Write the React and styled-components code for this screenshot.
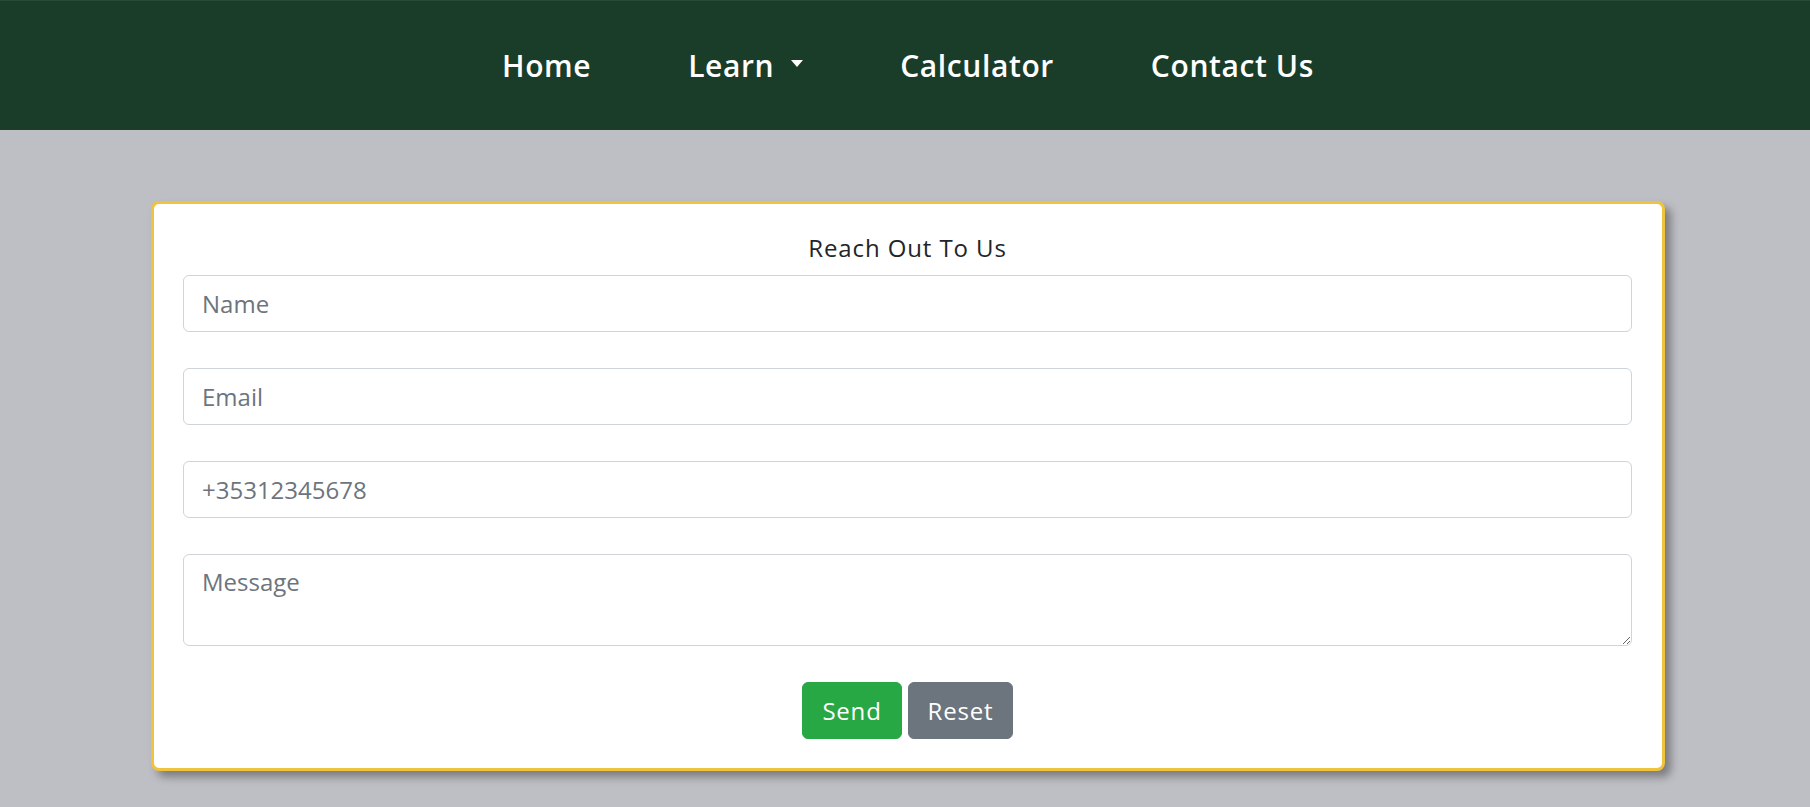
import React from "react";
import styled, { createGlobalStyle } from "styled-components";

const Global = createGlobalStyle`
  * { box-sizing: border-box; }
  html, body { margin: 0; padding: 0; }
  body {
    background: #bebfc4;
    font-family: "Open Sans", "Liberation Sans", sans-serif;
    color: #212529;
    min-height: 807px;
  }
`;

const NavBar = styled.nav`
  height: 130px;
  background: #1a3d29;
  border-top: 1px solid #274a36;
  display: flex;
  align-items: center;
  justify-content: center;
  padding-left: 6px;
`;

const NavList = styled.ul`
  list-style: none;
  margin: 0;
  padding: 0;
  display: flex;
  align-items: center;
  gap: 97px;
`;

const NavLink = styled.a`
  display: flex;
  align-items: center;
  gap: 17px;
  color: #ffffff;
  text-decoration: none;
  font-family: "Open Sans", "Lato", sans-serif;
  font-weight: 600;
  font-size: 30px;
  line-height: 45px;
  letter-spacing: 0.6px;
`;

const Caret = styled.span`
  width: 0;
  height: 0;
  border-left: 6.5px solid transparent;
  border-right: 6.5px solid transparent;
  border-top: 7px solid #ffffff;
  margin-top: -4px;
`;

const Main = styled.main`
  padding: 71px 145px 0 151px;
`;

const Card = styled.section`
  background: #ffffff;
  border: 3px solid #efc33e;
  border-radius: 8px;
  box-shadow: 6px 6px 9px rgba(0, 0, 0, 0.35);
  padding: 26px 30px 29px 29px;
`;

const Heading = styled.h2`
  margin: 0 0 9px;
  text-align: center;
  font-size: 24px;
  font-weight: 400;
  line-height: 36px;
  letter-spacing: 0.9px;
  color: #212529;
`;

const Form = styled.form`
  display: flex;
  flex-direction: column;
  gap: 36px;
`;

const fieldBase = `
  width: 100%;
  display: block;
  font-family: "Open Sans", "Liberation Sans", sans-serif;
  font-size: 24px;
  line-height: 36px;
  color: #495057;
  background: #ffffff;
  border: 1px solid #ced4da;
  border-radius: 6px;
  padding: 9px 18px;
  outline: none;
  &::placeholder { color: #6c757d; opacity: 1; }
`;

const Input = styled.input`
  ${fieldBase}
  height: 57px;
`;

const TextArea = styled.textarea`
  ${fieldBase}
  height: 92px;
  resize: vertical;
`;

const Actions = styled.div`
  display: flex;
  justify-content: center;
  gap: 6px;
`;

const Button = styled.button`
  font-family: "Open Sans", "Liberation Sans", sans-serif;
  font-size: 24px;
  line-height: 36px;
  letter-spacing: 0.8px;
  height: 57px;
  padding: 9px 16px;
  min-width: ${(p) => p.$w};
  border: 1px solid ${(p) => p.$bg};
  background: ${(p) => p.$bg};
  color: #ffffff;
  border-radius: 6px;
  cursor: pointer;
`;

export default function App() {
  return (
    <>
      <Global />
      <NavBar>
        <NavList>
          <li><NavLink href="#">Home</NavLink></li>
          <li><NavLink href="#">Learn <Caret /></NavLink></li>
          <li><NavLink href="#">Calculator</NavLink></li>
          <li><NavLink href="#">Contact Us</NavLink></li>
        </NavList>
      </NavBar>
      <Main>
        <Card>
          <Heading>Reach Out To Us</Heading>
          <Form onSubmit={(e) => e.preventDefault()}>
            <Input type="text" placeholder="Name" />
            <Input type="email" placeholder="Email" />
            <Input type="tel" placeholder="+35312345678" />
            <TextArea rows={2} placeholder="Message" />
            <Actions>
              <Button type="submit" $bg="#28a745" $w="100px">Send</Button>
              <Button type="reset" $bg="#6c757d" $w="105px">Reset</Button>
            </Actions>
          </Form>
        </Card>
      </Main>
    </>
  );
}
